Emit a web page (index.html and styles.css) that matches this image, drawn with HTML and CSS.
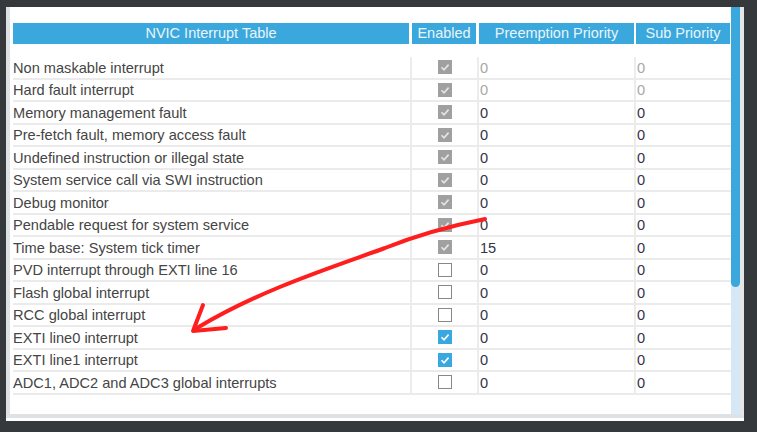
FILE: index.html
```html
<!DOCTYPE html>
<html>
<head>
<meta charset="utf-8">
<link rel="stylesheet" href="styles.css">
</head>
<body>
<div class="panel">
  <div class="inner">
    <div class="content">
      <div class="head">
        <div class="hc h1">NVIC Interrupt Table</div>
        <div class="hc h2">Enabled</div>
        <div class="hc h3">Preemption Priority</div>
        <div class="hc h4">Sub Priority</div>
      </div>
      <div class="rows">
        <div class="row"><div class="name">Non maskable interrupt</div><div class="en"><span class="cb gray"><svg viewBox="0 0 14 14"><polyline points="3.5,7.3 6,9.8 10.6,4.6"/></svg></span></div><div class="num dim">0</div><div class="num dim">0</div></div>
        <div class="row"><div class="name">Hard fault interrupt</div><div class="en"><span class="cb gray"><svg viewBox="0 0 14 14"><polyline points="3.5,7.3 6,9.8 10.6,4.6"/></svg></span></div><div class="num dim">0</div><div class="num dim">0</div></div>
        <div class="row"><div class="name">Memory management fault</div><div class="en"><span class="cb gray"><svg viewBox="0 0 14 14"><polyline points="3.5,7.3 6,9.8 10.6,4.6"/></svg></span></div><div class="num">0</div><div class="num">0</div></div>
        <div class="row"><div class="name">Pre-fetch fault, memory access fault</div><div class="en"><span class="cb gray"><svg viewBox="0 0 14 14"><polyline points="3.5,7.3 6,9.8 10.6,4.6"/></svg></span></div><div class="num">0</div><div class="num">0</div></div>
        <div class="row"><div class="name">Undefined instruction or illegal state</div><div class="en"><span class="cb gray"><svg viewBox="0 0 14 14"><polyline points="3.5,7.3 6,9.8 10.6,4.6"/></svg></span></div><div class="num">0</div><div class="num">0</div></div>
        <div class="row"><div class="name">System service call via SWI instruction</div><div class="en"><span class="cb gray"><svg viewBox="0 0 14 14"><polyline points="3.5,7.3 6,9.8 10.6,4.6"/></svg></span></div><div class="num">0</div><div class="num">0</div></div>
        <div class="row"><div class="name">Debug monitor</div><div class="en"><span class="cb gray"><svg viewBox="0 0 14 14"><polyline points="3.5,7.3 6,9.8 10.6,4.6"/></svg></span></div><div class="num">0</div><div class="num">0</div></div>
        <div class="row"><div class="name">Pendable request for system service</div><div class="en"><span class="cb gray"><svg viewBox="0 0 14 14"><polyline points="3.5,7.3 6,9.8 10.6,4.6"/></svg></span></div><div class="num">0</div><div class="num">0</div></div>
        <div class="row"><div class="name">Time base: System tick timer</div><div class="en"><span class="cb gray"><svg viewBox="0 0 14 14"><polyline points="3.5,7.3 6,9.8 10.6,4.6"/></svg></span></div><div class="num">15</div><div class="num">0</div></div>
        <div class="row"><div class="name">PVD interrupt through EXTI line 16</div><div class="en"><span class="cb off"></span></div><div class="num">0</div><div class="num">0</div></div>
        <div class="row"><div class="name">Flash global interrupt</div><div class="en"><span class="cb off"></span></div><div class="num">0</div><div class="num">0</div></div>
        <div class="row"><div class="name">RCC global interrupt</div><div class="en"><span class="cb off"></span></div><div class="num">0</div><div class="num">0</div></div>
        <div class="row"><div class="name">EXTI line0 interrupt</div><div class="en"><span class="cb blue"><svg viewBox="0 0 14 14"><polyline points="3.5,7.3 6,9.8 10.6,4.6"/></svg></span></div><div class="num">0</div><div class="num">0</div></div>
        <div class="row"><div class="name">EXTI line1 interrupt</div><div class="en"><span class="cb blue"><svg viewBox="0 0 14 14"><polyline points="3.5,7.3 6,9.8 10.6,4.6"/></svg></span></div><div class="num">0</div><div class="num">0</div></div>
        <div class="row"><div class="name">ADC1, ADC2 and ADC3 global interrupts</div><div class="en"><span class="cb off"></span></div><div class="num">0</div><div class="num">0</div></div>
      </div>
    </div>
    <div class="scroll"><div class="thumb"></div></div>
  </div>
</div>
<svg class="annot" viewBox="0 0 757 432" width="757" height="432">
  <path d="M485,219 C455,225 420,234 385,248 C330,268 260,290 197,328"/>
  <path d="M203,305 L193,331 L226,328"/>
</svg>
</body>
</html>
```

FILE: styles.css
```css
html, body {
  margin: 0;
  padding: 0;
}
body {
  background: #35393c;
  width: 757px;
  height: 432px;
  overflow: hidden;
  position: relative;
  font-family: "Liberation Sans", Arial, sans-serif;
  padding-top: 7px;
  box-sizing: border-box;
}
.panel {
  margin-left: 6px;
  width: 738px;
  height: 414px;
  background: #fff;
}
.inner {
  display: flex;
  height: 411px;
  box-sizing: border-box;
  border-left: 4px solid #dfe2e4;
  border-right: 4px solid #e4e6e8;
  border-bottom: 4px solid #dfe2e4;
}
.content {
  width: 721px;
  padding: 16px 0 0 3px;
  box-sizing: border-box;
}
.head,
.row {
  display: grid;
  grid-template-columns: 397px 67px 157px 96px;
}
.head {
  height: 21px;
  margin-bottom: 13px;
}
.hc {
  background: #3aa8dc;
  color: #e9f5fb;
  font-size: 14.5px;
  line-height: 21px;
  text-align: center;
  white-space: nowrap;
}
.h1 { margin-right: 1px; }
.h2 { margin-left: 2px; margin-right: 1px; }
.h3 { margin-left: 2px; }
.h4 { margin-left: 2px; }
.row {
  height: 22.5px;
  box-sizing: border-box;
  border-bottom: 2px solid #ebebeb;
  font-size: 14.6px;
  color: #454545;
}
.row > div {
  display: flex;
  align-items: center;
}
.row > div + div {
  border-left: 2px solid #ececec;
}
.name {
  white-space: nowrap;
  padding-top: 1px;
}
.en {
  justify-content: center;
}
.num {
  padding-left: 1px;
  padding-top: 1px;
  color: #33334a;
}
.num.dim {
  color: #a8a8a8;
}
.cb {
  width: 14px;
  height: 14px;
  box-sizing: border-box;
  display: block;
}
.cb svg {
  display: block;
  width: 14px;
  height: 14px;
  fill: none;
  stroke: #fff;
  stroke-width: 1.6;
}
.cb.gray { background: #a0a0a0; }
.cb.gray svg { stroke: #e6e6e6; }
.cb.blue { background: #3aa8e0; }
.cb.off {
  background: #fff;
  border: 1.5px solid #888;
}
.scroll {
  width: 9px;
  background: #d6e7f5;
}
.thumb {
  height: 280px;
  background: #3aa8dc;
  border-radius: 0 0 5px 5px;
}
.annot {
  position: absolute;
  left: 0;
  top: 0;
  pointer-events: none;
}
.annot path {
  fill: none;
  stroke: #ff1e1e;
  stroke-width: 4;
  stroke-linecap: round;
  stroke-linejoin: round;
}
```
